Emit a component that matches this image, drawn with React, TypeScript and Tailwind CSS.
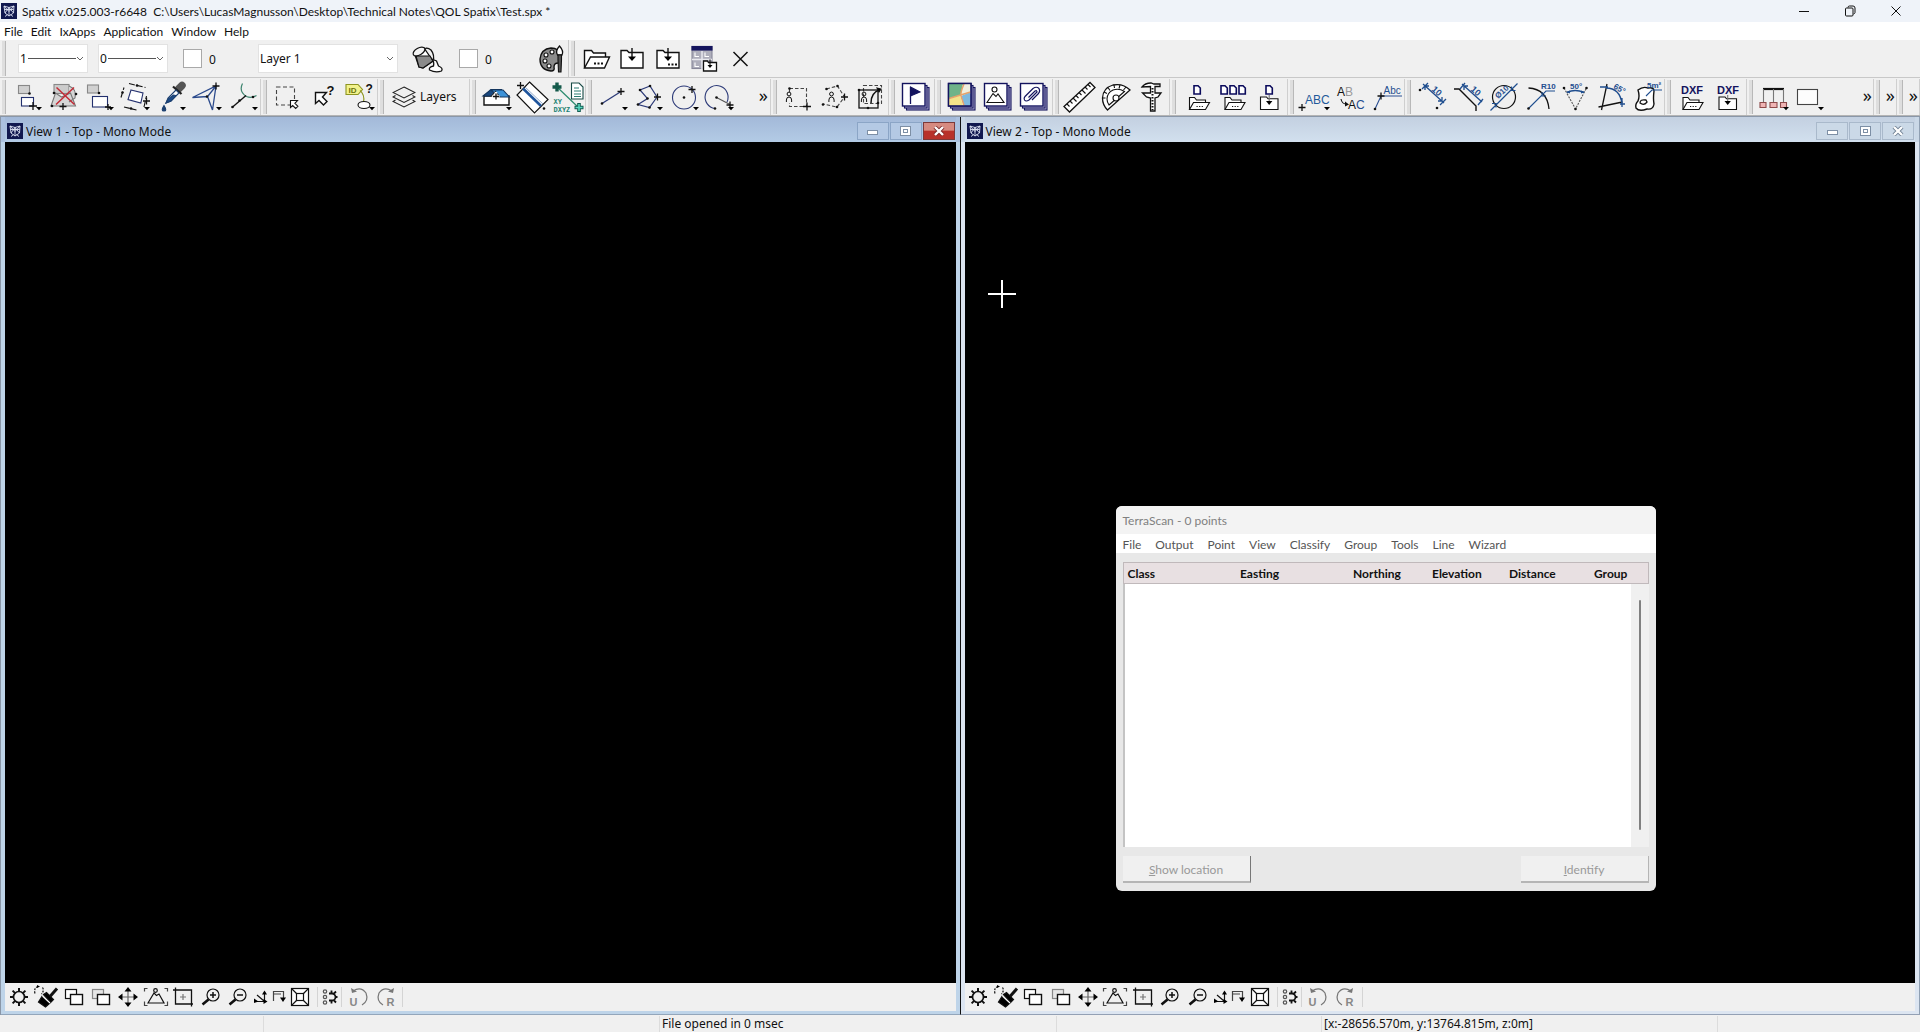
import React from 'react';

type IconProps = { children: React.ReactNode };

// 36px drawing used on the main tool bars
const Icon: React.FC<IconProps> = ({ children }) => (
  <svg viewBox="0 0 36 36" className="h-9 w-9 shrink-0" fill="none" stroke="#111" strokeWidth="1.1" aria-hidden="true">
    {children}
  </svg>
);

// smaller drawing used below each view
const SmallIcon: React.FC<IconProps> = ({ children }) => (
  <svg viewBox="0 0 28 28" className="h-7 w-7 shrink-0" fill="none" stroke="#111" strokeWidth="1.2" aria-hidden="true">
    {children}
  </svg>
);

const Tri = () => <path d="M27 28h6l-3 3.2z" fill="#000" stroke="none" />;

const Plus = ({ x, y, r = 3.5 }: { x: number; y: number; r?: number }) => (
  <path d={`M${x - r} ${y}h${2 * r}M${x} ${y - r}v${2 * r}`} strokeWidth="1.3" />
);

const Dots = ({ at }: { at: number[][] }) => (
  <g fill="#111" stroke="none">
    {at.map(([x, y]) => <circle key={`${x}-${y}`} cx={x} cy={y} r="1.3" />)}
  </g>
);

const Glyph = ({ x, y, size, fill = '#1f4e8f', rotate = 0, bold = false, children }: {
  x: number; y: number; size: number; fill?: string; rotate?: number; bold?: boolean; children: string;
}) => (
  <text
    x={x}
    y={y}
    fontSize={size}
    fill={fill}
    stroke="none"
    fontWeight={bold ? 700 : 400}
    fontFamily="Liberation Sans, sans-serif"
    transform={rotate ? `rotate(${rotate} ${x} ${y})` : undefined}
  >
    {children}
  </text>
);

const Person = ({ x, y }: { x: number; y: number }) => (
  <g strokeWidth="1">
    <circle cx={x} cy={y - 3} r="1.9" />
    <path d={`M${x - 2.6} ${y + 5}v-2q0-3 2.6-3t2.6 3v2`} />
  </g>
);

const Folder = ({ x, y }: { x: number; y: number }) => (
  <g>
    <path d={`M${x} ${y + 12}V${y}h5l2 2.5h9v3`} fill="#fff" />
    <path d={`M${x} ${y + 12}l4-7h16l-4 7z`} fill="#fff" />
    <path d={`M${x + 7} ${y + 9}h7`} strokeDasharray="1.2 1.4" />
  </g>
);

const SaveBox = ({ x, y }: { x: number; y: number }) => (
  <g>
    <path d={`M${x} ${y}h6l1.5 1.8h10V${y + 12.5}H${x}z`} fill="#fff" />
    <path d={`M${x + 8.7} ${y - 2}v6`} stroke="#777" />
    <path d={`M${x + 5.5} ${y + 4}h6.4l-3.2 4z`} fill="#000" stroke="none" />
  </g>
);

const MiniDoc = ({ x }: { x: number }) => (
  <path d={`M${x} 6.7h4l2.3 2.300v6H${x}z`} fill="#fff" stroke="#0b0b5c" strokeWidth="1.6" />
);

const Stack = ({ children }: IconProps) => (
  <Icon>
    <rect x="8.5" y="8.5" width="22.5" height="22.5" fill="#b3b0d6" stroke="#14145e" />
    <rect x="6.5" y="6.5" width="22.5" height="22.5" fill="#b3b0d6" stroke="#14145e" />
    <rect x="4.5" y="4.5" width="22.5" height="22.5" fill="#fff" stroke="#14145e" strokeWidth="1.4" />
    {children}
  </Icon>
);

type Tool = { label: string; icon: React.ReactNode };

const editTools: Tool[] = [
  {
    label: 'Copy element',
    icon: (
      <Icon>
        <rect x="9.5" y="6.5" width="11" height="8" fill="#d0d0d0" stroke="#888" />
        <rect x="12.5" y="18.5" width="12" height="8.5" fill="#fff" stroke="#23306e" />
        <Plus x={24} y={27} r={4} />
        <Dots at={[[20.5, 14.5]]} />
        <Tri />
      </Icon>
    ),
  },
  {
    label: 'Delete element',
    icon: (
      <Icon>
        <rect x="9" y="5.5" width="15" height="9" fill="#ccc" stroke="#888" />
        <path d="M6 27l4.500-13 6 4 9-4 5 13zM24 7q8 3 6 12l-6 4" fill="#d6d6d6" stroke="#777" />
        <path d="M11.500 8.500l18 17M29 8.500l-18 17" stroke="#c32a35" strokeWidth="1.500" />
        <Plus x={18} y={27.500} />
        <Dots at={[[7, 27], [9, 14], [31, 15]]} />
      </Icon>
    ),
  },
  {
    label: 'Scale element',
    icon: (
      <Icon>
        <rect x="6.500" y="6" width="11" height="8" fill="#d0d0d0" stroke="#888" />
        <rect x="11.500" y="17.500" width="15" height="10.500" fill="#fff" stroke="#23306e" />
        <Plus x={27} y={28} r={3} />
        <Dots at={[[18, 14]]} />
        <Tri />
      </Icon>
    ),
  },
  {
    label: 'Rotate element',
    icon: (
      <Icon>
        <path d="M14 11l12 3-2.200 10-12.800-3.500z" fill="#fff" stroke="#23306e" />
        <path d="M12 4.500l16.500 4M4 18.500l3-10M7 28l12.500 3M27 28l2.500-11" strokeDasharray="6 2" />
        <Plus x={29.5} y={22} />
        <Dots at={[[20, 6.5], [5.5, 13.5], [14, 29.5]]} />
        <Tri />
      </Icon>
    ),
  },
  {
    label: 'Pick attributes',
    icon: (
      <Icon>
        <path d="M26 9.500l3-3" stroke="#555" strokeWidth="7.500" strokeLinecap="round" />
        <path d="M20 7.500l8.500 7.500" stroke="#222" strokeWidth="2.200" />
        <path d="M23 11l-8 8-2 5 5-2 8-8z" fill="#fff" stroke="#1b3f70" />
        <path d="M20.500 16l-5.500 4-2 4 5-2 5-5.500z" fill="#1b4b8a" stroke="#1b3f70" />
        <path d="M11 26.500q-3.500 5.500 0 5.500t0-5.500z" fill="#1b3f70" stroke="#1b3f70" />
        <Tri />
      </Icon>
    ),
  },
  {
    label: 'Modify vertex',
    icon: (
      <Icon>
        <path d="M3.500 18.500L27 7l-3.500 24-5-13.500zM27 7l-8 10" fill="none" stroke="#2b4a8c" strokeWidth="1.300" />
        <Plus x={27} y={7} />
        <Dots at={[[18, 17.5]]} />
        <Tri />
      </Icon>
    ),
  },
  {
    label: 'Trim element',
    icon: (
      <Icon>
        <path d="M17.500 4.500q-4 8 4 13 5 2 10-1" stroke="#3f8570" strokeWidth="1.200" />
        <path d="M7 28.500l14-12" strokeWidth="1.400" />
        <Dots at={[[7.5, 28], [14.5, 21.5], [28, 18]]} />
        <Tri />
      </Icon>
    ),
  },
];

const selectTools: Tool[] = [
  {
    label: 'Select by area',
    icon: (
      <Icon>
        <rect x="6.500" y="8" width="18" height="18" strokeDasharray="4 2.500" stroke="#444" />
        <path d="M27.500 21.500h-7v7l2.200-2 3 3 2.200-2.200-3-3z" fill="#fff" />
      </Icon>
    ),
  },
  {
    label: 'Select by attributes',
    icon: (
      <Icon>
        <path d="M20.500 13.500h-11v11l3.500-3 4.500 4.500 3.500-3.500-4.500-4.500z" fill="#fff" strokeWidth="1.400" />
        <Glyph x={20.500} y={15.500} size={13} fill="#111" bold>?</Glyph>
      </Icon>
    ),
  },
  {
    label: 'Identify element',
    icon: (
      <Icon>
        <path d="M4 5.500h12l4.500 5-4.500 5H4z" fill="#f2f28c" stroke="#8d9420" />
        <Glyph x={6.500} y={13.500} size={8} fill="#6c7410" bold>ID</Glyph>
        <path d="M18 11.500q5 4 3.500 12" stroke="#8d9420" />
        <Glyph x={23.500} y={14} size={12} fill="#111" bold>?</Glyph>
        <ellipse cx="22" cy="26" rx="6" ry="3.500" fill="#fff" />
        <Tri />
      </Icon>
    ),
  },
];

const modelTools: Tool[] = [
  {
    label: 'Building',
    icon: (
      <Icon>
        <path d="M5 17h25v9H5z" fill="#fff" strokeWidth="1.400" />
        <path d="M4 17l8-6.500h11l-6.500 1-3 5.500z" fill="#19487f" stroke="#14365e" />
        <path d="M12 11h12l6.500 7H20z" fill="#3c92d8" stroke="#14365e" />
        <path d="M12 17.500l4.500-5 4.500 5.500" fill="#fff" stroke="#222" />
        <path d="M17 13v9M13.500 17.500h7" stroke="#fff" strokeWidth="2.500" />
        <Plus x={17} y={17.500} r={3} />
        <Tri />
      </Icon>
    ),
  },
  {
    label: 'Clip section',
    icon: (
      <Icon>
        <path d="M14.500 3L33 20.500 19.500 34 2 16z" fill="#fff" strokeWidth="1.200" />
        <path d="M8 9.500L26 27" stroke="#1e549c" strokeWidth="2.600" />
        <path d="M10 8L28 25" stroke="#7797c2" strokeWidth="0.800" />
        <Plus x={5.500} y={6.500} />
        <Dots at={[[29, 29.5]]} />
      </Icon>
    ),
  },
  {
    label: 'Coordinate report',
    icon: (
      <Icon>
        <path d="M6 8l22 21" stroke="#2a8a6d" strokeWidth="1.200" />
        <path d="M6 3.500v9M1.500 8h9" stroke="#14594a" strokeWidth="3.400" />
        <path d="M28 24v9M23.500 28.500h9" stroke="#115c50" strokeWidth="3.600" />
        <path d="M28 25v7M24.500 28.500h7" stroke="#59d6bf" strokeWidth="1.600" />
        <path d="M20.500 4h7.500l4 4v12H20.500z" fill="#fff" stroke="#174a45" />
        <path d="M23 9h5M23 12h7M23 15h7M23 17.500h7" stroke="#2a7d72" />
        <text x="2.500" y="25" fontSize="7" fill="#1c8273" stroke="none" fontWeight="700" fontFamily="Liberation Mono, monospace">XY</text>
        <text x="2.500" y="33" fontSize="7" fill="#1c8273" stroke="none" fontWeight="700" fontFamily="Liberation Mono, monospace">DXYZ</text>
      </Icon>
    ),
  },
];

const drawTools: Tool[] = [
  {
    label: 'Place line',
    icon: (
      <Icon>
        <path d="M7 24.500L26 12.500" stroke="#2c3a78" strokeWidth="1.300" />
        <Plus x={26} y={12.500} />
        <Dots at={[[7, 24.5]]} />
        <Tri />
      </Icon>
    ),
  },
  {
    label: 'Place shape',
    icon: (
      <Icon>
        <path d="M20 7L10 11l7.500 8.500L8 25.500l11.500 3L27 18z" stroke="#2c3a78" strokeWidth="1.200" />
        <Plus x={27.500} y={18} />
        <Dots at={[[20, 7], [10, 11], [17.5, 19.5], [8, 25.5], [19.5, 28.5]]} />
        <Tri />
      </Icon>
    ),
  },
  {
    label: 'Place circle',
    icon: (
      <Icon>
        <circle cx="18" cy="18.500" r="11.500" stroke="#2c3a78" />
        <Plus x={26} y={10.500} />
        <Dots at={[[18, 18.5]]} />
        <Tri />
      </Icon>
    ),
  },
  {
    label: 'Place arc',
    icon: (
      <Icon>
        <path d="M14 29.500A11.500 11.500 0 1 1 26 23" stroke="#2c3a78" />
        <path d="M15.500 18.500L29 25.500" stroke="#555" />
        <Plus x={29} y={26} />
        <Dots at={[[15.5, 18.5], [14, 29.5]]} />
        <Tri />
      </Icon>
    ),
  },
];

const fenceTools: Tool[] = [
  {
    label: 'Fence by rectangle',
    icon: (
      <Icon>
        <rect x="9.500" y="9.500" width="17" height="18" strokeDasharray="3.500 2" stroke="#444" />
        <path d="M9.500 13v11" stroke="#f0f0f0" strokeWidth="3" />
        <Person x={9} y={18} />
        <Plus x={27} y={27.500} r={4} />
        <Dots at={[[9.5, 9.5]]} />
      </Icon>
    ),
  },
  {
    label: 'Fence by shape',
    icon: (
      <Icon>
        <path d="M10.500 10l11-3 7 11-7.500 10-14-3" strokeDasharray="3.500 2" stroke="#444" />
        <Person x={15.500} y={18} />
        <Plus x={28.500} y={18} />
        <Dots at={[[10.5, 10], [21.5, 7], [21, 28], [7, 25.5]]} />
      </Icon>
    ),
  },
  {
    label: 'Fence from element',
    icon: (
      <Icon>
        <rect x="11.500" y="6.500" width="18" height="18" strokeDasharray="3.500 2" stroke="#444" />
        <rect x="7" y="11" width="19" height="18" strokeWidth="1.300" />
        <Person x={12} y={18} />
        <path d="M19 24q0-10 8-13" strokeWidth="1.500" />
        <path d="M25 9l4 1-2 3z" fill="#000" />
        <Dots at={[[7, 11], [16, 29], [26, 24]]} />
      </Icon>
    ),
  },
];

const flagTools: Tool[] = [
  {
    label: 'Flags',
    icon: (
      <Stack>
        <path d="M12.500 8v17" stroke="#14145e" strokeWidth="1.300" />
        <path d="M12.500 8L22 13l-9.500 4z" fill="#14145e" stroke="#14145e" />
      </Stack>
    ),
  },
];

const rasterTools: Tool[] = [
  {
    label: 'Map server',
    icon: (
      <Stack>
        <path d="M5 5h14l-2 11-12 4z" fill="#6fb389" stroke="none" />
        <path d="M19 5h7.500v10l-9.500 1z" fill="#f0efe0" stroke="none" />
        <path d="M17 17l9.500-4v13.500h-7z" fill="#7fb9df" stroke="none" />
        <path d="M5 20l11-3.500 3 10H5z" fill="#f3e28a" stroke="none" />
        <path d="M5 19.500L26.500 13M20 5q-4 9-3 12l3 9.500" stroke="#e7a36b" strokeWidth="1.500" />
        <rect x="4.500" y="4.500" width="22.500" height="22.500" stroke="#14145e" strokeWidth="1.400" />
      </Stack>
    ),
  },
  {
    label: 'Raster images',
    icon: (
      <Stack>
        <circle cx="14.500" cy="10.500" r="2.500" />
        <path d="M7 23.500h17l-6-8.500-2 2.500-3-3z" />
      </Stack>
    ),
  },
  {
    label: 'Reference files',
    icon: (
      <Stack>
        <path d="M12.500 18.500l6.500-6.500q2-1 2 1l-8 8q-3 2-4.500 0-1-2 .5-3.500l8-8q3.500-2.500 6 0 1.500 2.500-.5 5L16 21" stroke="#14145e" strokeWidth="1.200" />
      </Stack>
    ),
  },
];

const measureTools: Tool[] = [
  {
    label: 'Measure distance',
    icon: (
      <Icon>
        <path d="M28 3.500l5 5-25.500 24.500-5.500-5.500z" fill="#fff" strokeWidth="1.300" />
        <path d="M5 25l2.500 2.500M8 22l2.500 2.500M11 19l3.500 3.500M14 16.500l2.500 2.500M17 13.500l2.500 2.500M20 11l3.500 3.500M23 8l2.500 2.500M26 5.500l2.500 2.500" />
      </Icon>
    ),
  },
  {
    label: 'Measure angle',
    icon: (
      <Icon>
        <path d="M9.500 31L32 11Q25 4 15 6 5 9 4.500 19q0 7 5 12z" fill="#fff" strokeWidth="1.300" />
        <path d="M11 26L26.500 12.500Q21 9 15 11 9 14 9 20q0 3 2 6z" />
        <path d="M4.500 19h3M6 13l3 1.500M10 8.500l2 3M16 6l.5 3M22 6l-1 3.500M28 8l-2.500 3" />
        <circle cx="18" cy="19" r="3" fill="#fff" />
      </Icon>
    ),
  },
  {
    label: 'Caliper',
    icon: (
      <Icon>
        <path d="M8 8q3-4 9-4l3 1h6v2.500h-5V14h6l-3 4-3 1v13h-4.500V19l-4-1-4-4h8V7.500z" fill="#fff" strokeWidth="1.300" />
        <path d="M18.500 9v22" strokeDasharray="1.500 1.500" strokeWidth="2" />
      </Icon>
    ),
  },
];

const fileTools: Tool[] = [
  { label: 'Open design', icon: <Icon><MiniDoc x={15} /><Folder x={10.500} y={18.500} /></Icon> },
  { label: 'Open designs', icon: <Icon><MiniDoc x={6} /><MiniDoc x={15} /><MiniDoc x={24} /><Folder x={10} y={18.500} /></Icon> },
  { label: 'Save design', icon: <Icon><MiniDoc x={15} /><SaveBox x={9.500} y={18} /></Icon> },
];

const textTools: Tool[] = [
  {
    label: 'Place text',
    icon: (
      <Icon>
        <Glyph x={8} y={25} size={12} fill="#1f5a9a">ABC</Glyph>
        <Plus x={5} y={28.500} />
        <Tri />
      </Icon>
    ),
  },
  {
    label: 'Edit text',
    icon: (
      <Icon>
        <Glyph x={4} y={16.500} size={12} fill="#111">A</Glyph>
        <Glyph x={12} y={16.500} size={12} fill="#999">B</Glyph>
        <Glyph x={15} y={29.500} size={12} fill="#111">A</Glyph>
        <Glyph x={23} y={29.500} size={12}>C</Glyph>
        <path d="M8 20q1 5 5 5" />
        <path d="M12 22.500l4 3-4 2z" fill="#111" stroke="none" />
      </Icon>
    ),
  },
  {
    label: 'Place label',
    icon: (
      <Icon>
        <Glyph x={14.500} y={14.500} size={10}>Abc</Glyph>
        <path d="M12 17h21M12 17L6 30" stroke="#2b4f92" />
        <Plus x={12} y={17} />
        <Dots at={[[6, 30]]} />
      </Icon>
    ),
  },
];

const dimensionTools: Tool[] = [
  {
    label: 'Dimension distance',
    icon: (
      <Icon>
        <path d="M9 5l21 19M8 10l6-6M26 26l6-6M11 7v4M11 7h4M28 22v-4M28 22h-4" stroke="#1f4e8f" strokeWidth="1.300" />
        <Glyph x={17} y={11} size={9} rotate={42} bold>10</Glyph>
        <Dots at={[[6, 11], [23, 29]]} />
      </Icon>
    ),
  },
  {
    label: 'Dimension line',
    icon: (
      <Icon>
        <path d="M12 5l20 18M10 10l5-6M28 26l5-6M14 7v4M14 7h4" stroke="#1f4e8f" strokeWidth="1.300" />
        <Glyph x={20} y={11} size={9} rotate={42} bold>10</Glyph>
        <path d="M4 10h5l17 17v5" strokeWidth="1.400" />
      </Icon>
    ),
  },
  {
    label: 'Dimension diameter',
    icon: (
      <Icon>
        <circle cx="18" cy="18" r="11.500" strokeWidth="1.200" />
        <path d="M4.500 31.500L31.500 4.500M25.500 7.500v4h4M10 28.500v-4H6" stroke="#1f4e8f" strokeWidth="1.200" />
        <Glyph x={12} y={20} size={8} rotate={-42} bold>Ø10</Glyph>
      </Icon>
    ),
  },
  {
    label: 'Dimension radius',
    icon: (
      <Icon>
        <path d="M6.500 9Q25 10 27 30" strokeWidth="1.300" />
        <path d="M6.500 29.500L24 12h9M20 13v4h4" stroke="#1f4e8f" />
        <Glyph x={19} y={10} size={8} bold>R10</Glyph>
        <Dots at={[[6.5, 29.5]]} />
      </Icon>
    ),
  },
  {
    label: 'Dimension angle',
    icon: (
      <Icon>
        <path d="M6 9l11.500 21L28.500 9" stroke="#555" strokeDasharray="2 1.200" />
        <path d="M9 13.500q8-4 17 0" stroke="#1f4e8f" strokeWidth="1.400" />
        <path d="M8 13l4-1.500v3zM27 13l-4-1.500v3z" fill="#1f4e8f" stroke="none" />
        <Glyph x={12} y={10} size={8} bold>50°</Glyph>
        <Dots at={[[6, 9], [28.5, 9], [17.5, 30]]} />
      </Icon>
    ),
  },
  {
    label: 'Dimension line angle',
    icon: (
      <Icon>
        <path d="M13 5L7.500 31M4.500 28l24-5" strokeWidth="1.300" />
        <path d="M12 9q14 0 16 16M6 8h8M28 19v9M26 25h5" stroke="#1f4e8f" strokeWidth="1.300" />
        <Glyph x={19} y={9} size={8} rotate={30} bold>65°</Glyph>
      </Icon>
    ),
  },
  {
    label: 'Measure area',
    icon: (
      <Icon>
        <path d="M8 11q5-4 10-2 6-1 6 3-1 8 0 13-1 6-7 5-8 3-11-1-1-4 2-7 2-5 0-11z" fill="#fff" strokeWidth="1.400" />
        <path d="M10 24q0-4 6-3l1 2q-3 4-7 1z" strokeWidth="1.300" />
        <path d="M16 17l6-6h10" stroke="#1f4e8f" />
        <Glyph x={17} y={9} size={8} bold>5m²</Glyph>
      </Icon>
    ),
  },
];

const dxfTools: Tool[] = [
  { label: 'Import DXF', icon: <Icon><Glyph x={7} y={15} size={11} fill="#14145e" bold>DXF</Glyph><Folder x={9} y={18.500} /></Icon> },
  { label: 'Export DXF', icon: <Icon><Glyph x={7} y={15} size={11} fill="#14145e" bold>DXF</Glyph><SaveBox x={9} y={18} /></Icon> },
];

const cellTools: Tool[] = [
  {
    label: 'Create cell',
    icon: (
      <Icon>
        <path d="M7 10h21" strokeWidth="2.200" />
        <path d="M7.500 10v13M17.500 10v13M27.500 10v13" stroke="#777" />
        <path d="M4 23.500h6v5H4zM14 23.500h7v5h-7zM24.500 23.500h6v5h-6z" fill="#efb4b4" stroke="#8d4a4a" />
        <Tri />
      </Icon>
    ),
  },
  {
    label: 'Place cell',
    icon: (
      <Icon>
        <rect x="6.500" y="10.500" width="20" height="15" fill="#fdfdfd" stroke="#444" />
        <Tri />
      </Icon>
    ),
  },
];

const ixTools: Tool[] = [
  {
    label: 'Open file',
    icon: (
      <Icon>
        <path d="M5.500 28V10.500h7l2 2.500h12v4" fill="#fff" strokeWidth="1.400" />
        <path d="M5.500 28l6-11h19l-5 11z" fill="#fff" strokeWidth="1.400" />
        <path d="M15 23.500h9" strokeDasharray="2 1.500" strokeWidth="2" />
      </Icon>
    ),
  },
  {
    label: 'Save file',
    icon: (
      <Icon>
        <path d="M6 10.500h6l2 2h14V28H6z" fill="#fff" strokeWidth="1.400" />
        <path d="M17 8v10" strokeWidth="1.400" />
        <path d="M13 16.500h8L17 21z" fill="#000" stroke="none" />
      </Icon>
    ),
  },
  {
    label: 'Save file as',
    icon: (
      <Icon>
        <path d="M6 10.500h6l2 2h14V28H6z" fill="#fff" strokeWidth="1.400" />
        <path d="M17 8v10" strokeWidth="1.400" />
        <path d="M13 16.500h8L17 21z" fill="#000" stroke="none" />
        <path d="M17 24.500h9" strokeDasharray="2 1.500" strokeWidth="2" />
      </Icon>
    ),
  },
  {
    label: 'Save view layout',
    icon: (
      <Icon>
        <rect x="5" y="6.500" width="20" height="22" fill="#aeaebb" stroke="#88889a" />
        <rect x="5" y="6.500" width="20" height="3.500" fill="#14145e" stroke="#14145e" />
        <path d="M15 11v18M5 19.500h20" stroke="#e8e8ee" strokeWidth="1.500" />
        <path d="M8 12.500v4h4M18 12.500v4h4M8 22.500v4h4" stroke="#fff" />
        <path d="M16.500 21h4l1 1.500h8v8.500h-13z" fill="#fff" strokeWidth="1.300" />
        <path d="M23 19.500v6" />
        <path d="M20.500 25h5L23 28z" fill="#000" stroke="none" />
      </Icon>
    ),
  },
  { label: 'Close file', icon: <Icon><path d="M10.500 12l14 14M24.500 12l-14 14" strokeWidth="1.500" /></Icon> },
];

const viewTools: Tool[] = [
  {
    label: 'View settings',
    icon: (
      <SmallIcon>
        <circle cx="14" cy="14" r="5.500" strokeWidth="1.700" />
        <path d="M14 5v3.500M14 19.500V23M5 14h3.500M19.500 14H23M7.600 7.600l2.500 2.500M17.900 17.900l2.500 2.500M20.400 7.600l-2.500 2.500M10.100 17.900l-2.500 2.500" strokeWidth="2" />
      </SmallIcon>
    ),
  },
  {
    label: 'Redraw view',
    icon: (
      <SmallIcon>
        <path d="M25 5.500l-7 8" strokeWidth="3" />
        <path d="M11.500 11.500l3-2 7 7-3 3z" fill="#000" />
        <path d="M10 13.500l7.500 7-4 3.500-7-5z" fill="#000" />
        <path d="M10.500 13l7.500 7" stroke="#fff" strokeWidth="1.100" />
        <path d="M3 10.500Q1.500 5 6 3.500M10.500 4.500q2 3-1 6.500" strokeDasharray="2 1.200" />
        <path d="M5 2l3 1.500-3 1.500z" fill="#000" stroke="none" />
      </SmallIcon>
    ),
  },
  {
    label: 'Bring view to front',
    icon: (
      <SmallIcon>
        <rect x="5.500" y="6.500" width="11" height="9" fill="#fff" />
        <rect x="10.500" y="11.500" width="12" height="10" fill="#fff" strokeWidth="1.400" />
      </SmallIcon>
    ),
  },
  {
    label: 'Send view to back',
    icon: (
      <SmallIcon>
        <rect x="5.500" y="6.500" width="11" height="9" fill="#e6e6e6" stroke="#888" />
        <rect x="10.500" y="11.500" width="12" height="10" fill="#fff" strokeWidth="1.400" />
      </SmallIcon>
    ),
  },
  {
    label: 'Pan view',
    icon: (
      <SmallIcon>
        <path d="M14 6v16M6 14h16" stroke="#666" />
        <path d="M14 4l3.500 4.500h-7zM14 24l3.500-4.500h-7zM4 14l4.500-3.500v7zM24 14l-4.500-3.500v7z" fill="#000" stroke="none" />
      </SmallIcon>
    ),
  },
  {
    label: 'Fit view',
    icon: (
      <SmallIcon>
        <circle cx="13.500" cy="7.500" r="1.800" />
        <path d="M6 20l6-10 2.500 2.500L17 11l5 9z" />
        <path d="M2.500 8.500v-3h3M22.500 5.500h3v3M2.500 18.500v4h3M22.500 22.500h3v-4" stroke="#444" />
      </SmallIcon>
    ),
  },
  {
    label: 'Window area',
    icon: (
      <SmallIcon>
        <path d="M4 7h18.500V23.500M6.500 4.500V21H24" strokeWidth="1.300" />
        <path d="M14 11v6M11 14h6" stroke="#777" />
      </SmallIcon>
    ),
  },
  {
    label: 'Zoom in',
    icon: (
      <SmallIcon>
        <circle cx="16" cy="12" r="6" />
        <path d="M13 12h6M16 9v6" strokeWidth="1.500" />
        <path d="M11.500 16.500l-6 5" strokeWidth="2.600" />
      </SmallIcon>
    ),
  },
  {
    label: 'Zoom out',
    icon: (
      <SmallIcon>
        <circle cx="16" cy="12" r="6" />
        <path d="M13 12h6" strokeWidth="1.500" />
        <path d="M11.500 16.500l-6 5" strokeWidth="2.600" />
      </SmallIcon>
    ),
  },
];

const Handle = () => <span className="mx-[2px] my-px w-1 shrink-0 border-r border-[#b8b8b8] bg-[#dedede]" />;

const ToolButton: React.FC<{ tool: Tool }> = ({ tool }) => (
  <button type="button" aria-label={tool.label} className="flex min-w-0 flex-1 items-center justify-center">
    {tool.icon}
  </button>
);

const More = () => (
  <button type="button" aria-label="More tools" className="ml-auto shrink-0 pr-px pb-1 text-lg leading-5">
    »
  </button>
);

// One dockable group of the second tool bar
const ToolGroup: React.FC<{ tools?: Tool[]; width: string; row?: string; children?: React.ReactNode }> = ({
  tools,
  width,
  row = 'flex-1 pr-[2px]',
  children,
}) => (
  <div className={`flex shrink-0 border-r border-[#cfcfcf] ${width}`}>
    <Handle />
    {tools && (
      <div className={`flex pl-px ${row}`}>
        {tools.map((tool) => <ToolButton key={tool.label} tool={tool} />)}
      </div>
    )}
    {children}
  </div>
);

const AppLogo = () => (
  <svg viewBox="0 0 16 16" className="h-4 w-4 shrink-0" fill="none" stroke="#dfe4f5" strokeWidth="0.900" aria-hidden="true">
    <rect width="16" height="16" fill="#10184f" stroke="none" />
    <path d="M3 3l5 1.500L13 3l-.5 7L8 13l-4-3zM3 3l5 5.500L13 3M8 4.500V13M4 10l4-5.500 4.500 5.500M3.500 6.500h9M4 13.500l2.500-2M12 13.500l-2.500-2" />
  </svg>
);

const Chevron = () => (
  <svg viewBox="0 0 8 6" className="h-[6px] w-2" fill="none" stroke="#666" aria-hidden="true">
    <path d="M1 1l3 3 3-3" />
  </svg>
);

const Combo: React.FC<{ label: string; value: string; width: string; line?: boolean }> = ({ label, value, width, line }) => (
  <div className={`relative shrink-0 ${width}`}>
    <select
      aria-label={label}
      className="h-[29px] w-full appearance-none border border-[#e2e2e2] bg-white pt-px pl-px text-[12px] leading-4"
    >
      <option>{value}</option>
    </select>
    <span className="pointer-events-none absolute inset-y-0 right-1 left-2 flex items-center justify-end">
      {line && <span className="ml-[2px] h-px flex-1 bg-[#555]" />}
      <Chevron />
    </span>
  </div>
);

const Swatch: React.FC<{ label: string }> = ({ label }) => (
  <button type="button" aria-label={label} className="flex shrink-0 items-center gap-[7px]">
    <span className="h-[19px] w-[19px] border border-[#a9a9a9] bg-white" />
    <span className="pt-[2px]">0</span>
  </button>
);

const MenuBar = () => {
  const menus = ['File', 'Edit', 'IxApps', 'Application', 'Window', 'Help'];

  return (
    <nav className="flex h-[18px] items-center gap-2 bg-white pt-[2px] pl-1 font-['Lato',sans-serif]">
      {menus.map((menu) => <button key={menu} type="button" className="leading-4">{menu}</button>)}
    </nav>
  );
};

const AttributeBar = () => (
  <div className="flex h-[37px] bg-[#f0f0f0]">
    <div className="flex w-[569px] shrink-0 border-r border-[#c8c8c8]">
      <Handle />
      <div className="flex flex-1 items-center pl-[10px]">
        <Combo label="Line weight" value="1" width="w-[70px]" line />
        <span className="w-[10px]" />
        <Combo label="Line style" value="0" width="w-[70px]" line />
        <span className="w-[15px]" />
        <Swatch label="Line color" />
        <span className="w-[42px]" />
        <Combo label="Layer" value="Layer 1" width="w-[140px]" />
        <button type="button" aria-label="Fill" className="ml-[10px]">
          <Icon>
            <path d="M14 10q4-5 9-1 4 5 2 12" strokeWidth="1.300" />
            <path d="M7 14l9-7 9 13-10 7-4-1z" fill="#fff" strokeWidth="1.300" />
            <path d="M8 15l14 0 3 5-10 7-4-1z" fill="#8a8a8a" />
            <ellipse cx="11" cy="10.500" rx="6.500" ry="3.500" fill="#f4f4f4" strokeWidth="1.300" transform="rotate(-30 11 10.500)" />
            <path d="M23.500 18q3 2 2 7-5 1-4 4 6 3 12 1 2-3-3-5l-2-5z" fill="#fff" strokeWidth="1.300" />
          </Icon>
        </button>
        <span className="w-[15px]" />
        <Swatch label="Fill color" />
        <button type="button" aria-label="Palette" className="ml-[43px]">
          <Icon>
            <path d="M16 7Q6 8 5 18q0 11 11 12 4 0 3-4 0-4 4-4 4-1 3-8-2-7-10-7z" fill="#8c8c8c" strokeWidth="1.400" />
            <g fill="#fff">
              <circle cx="17" cy="11" r="2" />
              <circle cx="11" cy="14" r="2" />
              <circle cx="10" cy="20" r="2" />
              <circle cx="14" cy="25" r="2" />
            </g>
            <path d="M24.500 5q4.500 5 2.500 9h-4.500q-2.500-4 2-9z" fill="#fff" strokeWidth="1.300" />
            <path d="M23 14h3.500v5l-.5 12h-2.500l-.5-12z" fill="#555" />
          </Icon>
        </button>
      </div>
    </div>
    <div className="flex w-[186px] shrink-0">
      <Handle />
      <div className="flex flex-1 pb-px pl-[2px]">
        {ixTools.map((tool) => <ToolButton key={tool.label} tool={tool} />)}
      </div>
    </div>
  </div>
);

const ToolBar = () => (
  <div className="flex h-[39px] overflow-hidden border-y border-t-[#c8c8c8] border-b-[#b4b4b4] bg-[#f0f0f0] pt-px">
    <ToolGroup tools={editTools} width="w-[261px]" />
    <ToolGroup tools={selectTools} width="w-[117px]" />
    <ToolGroup width="w-[92px]">
      <button type="button" className="flex items-center gap-1 pl-[6px]">
        <svg viewBox="0 0 24 24" className="h-6 w-6" fill="none" stroke="#222" strokeWidth="1.100" aria-hidden="true">
          <path d="M12 2l11 5.500L12 13 1 7.500z" />
          <path d="M3.500 10.500L1 12l11 5.500L23 12l-2.500-1.500M3.500 15L1 16.500 12 22l11-5.500-2.500-1.500" />
        </svg>
        Layers
      </button>
    </ToolGroup>
    <ToolGroup tools={modelTools} width="w-[116px]" />
    <ToolGroup tools={drawTools} width="w-[185px]" row="w-[143px]">
      <More />
      <span className="w-px" />
    </ToolGroup>
    <ToolGroup tools={fenceTools} width="w-[118px]" />
    <ToolGroup tools={flagTools} width="w-[46px]" />
    <ToolGroup tools={rasterTools} width="w-[118px]" />
    <ToolGroup tools={measureTools} width="w-[117px]" />
    <ToolGroup tools={fileTools} width="w-[118px]" />
    <ToolGroup tools={textTools} width="w-[117px]" />
    <ToolGroup tools={dimensionTools} width="w-[260px]" />
    <ToolGroup tools={dxfTools} width="w-[82px]" />
    <ToolGroup tools={cellTools} width="w-[127px]" row="w-[72px]"><More /></ToolGroup>
    <ToolGroup width="w-[23px]"><More /></ToolGroup>
    <ToolGroup width="w-[23px]"><More /></ToolGroup>
  </div>
);

const frameButton = 'flex h-[18px] w-8 items-center justify-center border';

const ViewTitle: React.FC<{ title: string; active: boolean }> = ({ title, active }) => (
  <header className={`flex h-[25px] items-center bg-linear-to-b pt-[2px] pr-px pl-[2px] ${active ? 'from-[#a3b9d9] to-[#b3cbe5]' : 'from-[#c3d0e1] to-[#d2e0ee]'}`}>
    <AppLogo />
    <h2 className="flex-1 pt-[2px] pl-[3px]">{title}</h2>
    <button type="button" aria-label="Minimize view" className={`${frameButton} ${active ? 'border-[#8ba5c6] bg-[#b4c9e4]' : 'border-[#a9b9cb] bg-[#cbd9e7]'}`}>
      <span className="mt-1 h-[5px] w-[11px] border border-[#7d8fa5] bg-white" />
    </button>
    <button type="button" aria-label="Maximize view" className={`${frameButton} ml-px ${active ? 'border-[#8ba5c6] bg-[#b4c9e4]' : 'border-[#a9b9cb] bg-[#cbd9e7]'}`}>
      <span className="flex h-[10px] w-[11px] items-center justify-center border border-[#7d8fa5] bg-white">
        <span className="h-1 w-[5px] border border-[#7d8fa5]" />
      </span>
    </button>
    <button type="button" aria-label="Close view" className={`${frameButton} ml-px ${active ? 'border-[#7c3a3a] bg-linear-to-b from-[#d68a80] from-45% to-[#b8312a] to-50%' : 'border-[#a9b9cb] bg-[#cbd9e7]'}`}>
      <svg viewBox="0 0 12 10" className="h-[10px] w-3" fill="none" aria-hidden="true">
        <path d="M2 1l8 8M10 1L2 9" stroke={active ? '#7a2a2a' : '#6f8093'} strokeWidth="4" />
        <path d="M2 1l8 8M10 1L2 9" stroke="#fff" strokeWidth="2.400" />
      </svg>
    </button>
  </header>
);

const ViewToolBar = () => (
  <div className="flex h-7 bg-[#f0f0f0]">
    <div className="flex w-[247px] shrink-0">
      {viewTools.map((tool) => <ToolButton key={tool.label} tool={tool} />)}
    </div>
    <button type="button" aria-label="Rotate view" className="flex w-[18px] shrink-0 items-center justify-center">
      <SmallIcon>
        <path d="M8 18.500h11M17.500 9v10M10 12l7 6" strokeWidth="1.200" />
        <path d="M17.500 7.500l2.500 4h-5zM20.500 18.500l-4-2.500v5zM7 20v-4.500l4.500 3z" fill="#000" stroke="none" />
      </SmallIcon>
    </button>
    <button type="button" aria-label="Rotate view by axis" className="flex w-[17px] shrink-0 items-center justify-center">
      <SmallIcon>
        <path d="M8.500 18V8.500h10V15M8.500 11h7.500" stroke="#444" />
        <path d="M18 19l-3-4.500h6z" fill="#000" stroke="none" />
      </SmallIcon>
    </button>
    <button type="button" aria-label="Perspective" className="flex w-[26px] shrink-0 items-center justify-center">
      <SmallIcon>
        <rect x="5.500" y="5.500" width="17" height="17" fill="#fff" />
        <rect x="10.500" y="10.500" width="7" height="7" />
        <path d="M5.500 5.500l5 5M22.500 5.500l-5 5M5.500 22.500l5-5M22.500 22.500l-5-5" />
      </SmallIcon>
    </button>
    <span className="mx-1 my-1 w-px shrink-0 bg-[#d4d4d4]" />
    <button type="button" aria-label="Display mode" className="flex w-4 shrink-0 items-center justify-center">
      <SmallIcon>
        <g stroke="#555">
          <circle cx="9" cy="8.500" r="1.700" />
          <circle cx="9" cy="14" r="1.700" />
          <circle cx="9" cy="19.500" r="1.700" />
        </g>
        <path d="M13 10.500h3a3.500 3.500 0 0 1 0 7h-3" strokeWidth="1.800" />
        <path d="M15.500 7.500v3M15.500 17.500v3M19.500 14h2M18 10.500l2-2M18 17.500l2 2" strokeWidth="1.800" />
      </SmallIcon>
    </button>
    <span className="mx-[3px] my-1 w-px shrink-0 bg-[#d4d4d4]" />
    <button type="button" aria-label="Undo view" className="flex w-[27px] shrink-0 items-center justify-center">
      <SmallIcon>
        <path d="M8 8q8-5 13 2 3 8-4 12" stroke="#777" />
        <path d="M6 5l1 5 5-1.500z" fill="#777" stroke="none" />
        <Glyph x={4.500} y={23} size={11} fill="#888" bold>U</Glyph>
      </SmallIcon>
    </button>
    <button type="button" aria-label="Redo view" className="flex w-[27px] shrink-0 items-center justify-center">
      <SmallIcon>
        <path d="M20 8Q12 3 7 10q-3 8 4 12" stroke="#777" />
        <path d="M22 5l-1 5-5-1.500z" fill="#777" stroke="none" />
        <Glyph x={14.500} y={23} size={11} fill="#888" bold>R</Glyph>
      </SmallIcon>
    </button>
    <span className="mx-[3px] my-1 w-px shrink-0 bg-[#d4d4d4]" />
  </div>
);

const ViewWindow: React.FC<{ title: string; active?: boolean; children?: React.ReactNode }> = ({ title, active = false, children }) => (
  <section className={`flex min-w-0 flex-1 flex-col border-r border-b px-1 pb-[3px] ${active ? 'border-r-[#111] border-b-[#93a6bb] bg-[#bed4e9]' : 'border-r-[#8f9fb2] border-b-[#93a0b4] bg-[#dce5f1]'}`}>
    <div className={`-mx-1 px-1 ${active ? 'bg-[#abc1df]' : 'bg-[#cad8e7]'}`}>
      <ViewTitle title={title} active={active} />
    </div>
    <div className="relative flex-1 bg-black">{children}</div>
    <ViewToolBar />
  </section>
);

// Floating TerraScan point list
const TerraScanWindow = () => {
  const menus = ['File', 'Output', 'Point', 'View', 'Classify', 'Group', 'Tools', 'Line', 'Wizard'];

  return (
    <div className="absolute top-[364px] left-[151px] flex h-[385px] w-[540px] flex-col overflow-hidden rounded-md bg-[#e8e8e8] font-['Lato',sans-serif]">
      <h2 className="h-7 shrink-0 bg-[#f3f3f3] pl-[7px] leading-[30px] text-[#808080]">TerraScan - 0 points</h2>
      <nav className="flex h-[19px] shrink-0 items-center gap-[14px] bg-white pt-[2px] pl-[7px] text-[#555]">
        {menus.map((menu) => <button key={menu} type="button" className="leading-4">{menu}</button>)}
      </nav>
      <div className="mx-[7px] mt-[9px] flex flex-1 flex-col">
        <table className="w-full table-fixed border border-[#c0b9bb] bg-[#e8e0e2] text-left font-bold">
          <thead>
            <tr className="h-[21px] leading-4">
              <th className="w-[117px] pt-[2px] pl-1">Class</th>
              <th className="w-[113px] pt-[2px]">Easting</th>
              <th className="w-[79px] pt-[2px]">Northing</th>
              <th className="w-[77px] pt-[2px]">Elevation</th>
              <th className="w-[85px] pt-[2px]">Distance</th>
              <th className="pt-[2px]">Group</th>
            </tr>
          </thead>
        </table>
        <div className="flex flex-1">
          <div className="flex-1 border-l-2 border-[#c4c4c4] bg-white" />
          <div className="flex w-[18px] justify-center bg-[#f0f0f0] pt-4 pb-[17px]">
            <span className="w-[2px] rounded bg-[#808080]" />
          </div>
        </div>
      </div>
      <div className="mx-[7px] mt-[9px] mb-2 flex shrink-0 justify-between text-[#999]">
        <button type="button" disabled className="h-[27px] w-32 border-r border-b-2 border-r-[#777] border-b-[#b5b5b5] bg-[#f0f0f0] pt-[2px]">
          <u>S</u>how location
        </button>
        <button type="button" disabled className="h-[27px] w-32 border-r border-b-2 border-[#b5b5b5] bg-[#f0f0f0] pt-[2px]">
          <u>I</u>dentify
        </button>
      </div>
    </div>
  );
};

const App: React.FC = () => {
  return (
    <div className="flex min-h-screen flex-col overflow-hidden bg-[#f0f0f0] font-['Noto_Sans',sans-serif] text-[12px] text-[#111]">
      <header className="flex h-[22px] items-center bg-[#eff3f9] pl-px">
        <AppLogo />
        <h1 className="flex-1 pt-[2px] pl-[5px] font-['Lato',sans-serif] whitespace-pre">
          {'Spatix v.025.003-r6648  C:\\Users\\LucasMagnusson\\Desktop\\Technical Notes\\QOL Spatix\\Test.spx *'}
        </h1>
        <div className="flex gap-[22px] pr-[12px]">
          <button type="button" aria-label="Minimize" className="p-1">
            <svg viewBox="0 0 16 16" className="h-4 w-4" stroke="#111"><path d="M3 8.500h10" /></svg>
          </button>
          <button type="button" aria-label="Restore" className="p-1">
            <svg viewBox="0 0 16 16" className="h-4 w-4" fill="none" stroke="#111">
              <path d="M6 4.500q0-1.500 1.500-1.500H11q2 0 2 2v4.500q0 1-1.500 1.500" />
              <rect x="3.500" y="5" width="7.500" height="8" rx="1" />
            </svg>
          </button>
          <button type="button" aria-label="Close" className="p-1">
            <svg viewBox="0 0 16 16" className="h-4 w-4" stroke="#111"><path d="M3.500 3.500l9 9M12.500 3.500l-9 9" /></svg>
          </button>
        </div>
      </header>
      <MenuBar />
      <AttributeBar />
      <ToolBar />

      <main className="flex flex-1 border-t border-l border-[#8a97a8]">
        <ViewWindow title="View 1 - Top - Mono Mode" active />
        <ViewWindow title="View 2 - Top - Mono Mode">
          <svg viewBox="0 0 28 28" className="absolute top-[138px] left-[23px] h-7 w-7" stroke="#fff" strokeWidth="2" aria-hidden="true">
            <path d="M0 14h28M14 0v28" />
          </svg>
          <TerraScanWindow />
        </ViewWindow>
      </main>

      <footer className="flex h-[17px] pt-px leading-4">
        <span className="w-[264px] shrink-0 border-r border-[#dcdcdc]" />
        <span className="w-[396px] shrink-0 border-r border-[#dcdcdc]" />
        <span className="w-[397px] shrink-0 border-r border-[#dcdcdc] pl-[2px]">File opened in 0 msec</span>
        <span className="w-[265px] shrink-0 border-r border-[#dcdcdc]" />
        <span className="w-[396px] shrink-0 border-r border-[#dcdcdc] pl-[2px]">[x:-28656.570m, y:13764.815m, z:0m]</span>
      </footer>
    </div>
  );
};

export default App;
